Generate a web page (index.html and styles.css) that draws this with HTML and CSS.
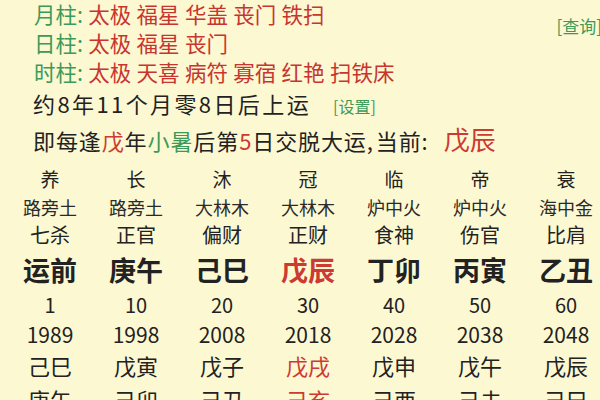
FILE: index.html
```html
<!DOCTYPE html>
<html lang="zh-CN">
<head>
    <meta charset="UTF-8">
    <meta name="viewport" content="width=device-width, initial-scale=1.0">
    <title>大运</title>
    <link rel="stylesheet" href="styles.css">
</head>
<body>

<div class="page">
    <div class="shensha">
        <div class="pillars">
            <div class="pillar"><span class="label">月柱:</span> 太极 福星 华盖 丧门 铁扫</div>
            <div class="pillar"><span class="label">日柱:</span> 太极 福星 丧门</div>
            <div class="pillar"><span class="label">时柱:</span> 太极 天喜 病符 寡宿 红艳 扫铁床</div>
        </div>
        <span class="link query">[查询]</span>
    </div>

    <div class="info qiyun">约8年11个月零8日后上运<span class="link setting">[设置]</span></div>
    <div class="info">即每逢<span class="red">戊</span>年<span class="green">小暑</span>后第<span class="red">5</span>日交脱大运,<span class="now">当前:</span><span class="current">戊辰</span></div>

    <div class="dayun">
        <div class="row stage">
            <div>养</div><div>长</div><div>沐</div><div>冠</div><div>临</div><div>帝</div><div>衰</div>
        </div>
        <div class="row nayin">
            <div>路旁土</div><div>路旁土</div><div>大林木</div><div>大林木</div><div>炉中火</div><div>炉中火</div><div>海中金</div>
        </div>
        <div class="row shishen">
            <div>七杀</div><div>正官</div><div>偏财</div><div>正财</div><div>食神</div><div>伤官</div><div>比肩</div>
        </div>
        <div class="row ganzhi">
            <div>运前</div><div>庚午</div><div>己巳</div><div class="red">戊辰</div><div>丁卯</div><div>丙寅</div><div>乙丑</div>
        </div>
        <div class="row age">
            <div>1</div><div>10</div><div>20</div><div>30</div><div>40</div><div>50</div><div>60</div>
        </div>
        <div class="row year">
            <div>1989</div><div>1998</div><div>2008</div><div>2018</div><div>2028</div><div>2038</div><div>2048</div>
        </div>
        <div class="row liunian">
            <div>己巳</div><div>戊寅</div><div>戊子</div><div class="red">戊戌</div><div>戊申</div><div>戊午</div><div>戊辰</div>
        </div>
        <div class="row liunian last">
            <div>庚午</div><div>己卯</div><div>己丑</div><div class="red">己亥</div><div>己酉</div><div>己未</div><div>己巳</div>
        </div>
    </div>
</div>

</body>
</html>
```

FILE: styles.css
```css
html, body {
    margin: 0;
    padding: 0;
    overflow: hidden;
}
body {
    font-family: "Noto Sans CJK SC", "Noto Sans", sans-serif;
    background-color: #fcf8d2;
    color: #222;
    width: 600px;
    height: 400px;
}
.page {
    margin-top: -1px;
}
.red {
    color: #cc3a32;
}
.green {
    color: #3b9a5a;
}
.link {
    color: #3b9a5a;
    font-size: 17px;
}

/* shensha lines */
.shensha {
    display: flex;
    justify-content: space-between;
    padding-left: 34px;
}
.pillar {
    font-size: 21.5px;
    line-height: 29px;
    word-spacing: 0.5px;
    color: #c8352f;
    white-space: nowrap;
}
.pillar .label {
    color: #3b9a5a;
}
.query {
    padding-top: 15px;
    margin-right: -2px;
    line-height: 24px;
}

/* qiyun info */
.info {
    padding-left: 33px;
    font-size: 22px;
    line-height: 34px;
    letter-spacing: 0.9px;
    white-space: nowrap;
}
.info.qiyun {
    letter-spacing: 2.4px;
}
.setting {
    font-size: 16px;
    margin-left: 22px;
    letter-spacing: 0;
}
.now {
    margin-left: 2px;
}
.current {
    color: #cc3a32;
    font-size: 26px;
    line-height: 20px;
    margin-left: 15px;
    letter-spacing: 0;
}

/* dayun table */
.dayun {
    margin-left: 7px;
    margin-top: 8px;
}
.row {
    display: grid;
    grid-template-columns: repeat(7, 86px);
    text-align: center;
    white-space: nowrap;
}
.stage {
    font-size: 19px;
    line-height: 28px;
}
.nayin {
    font-size: 18px;
    line-height: 28px;
    color: #2a2a2a;
}
.shishen {
    font-size: 20px;
    line-height: 28px;
}
.ganzhi {
    font-size: 27px;
    font-weight: bold;
    line-height: 42px;
}
.age {
    font-size: 20px;
    line-height: 28px;
}
.year {
    font-size: 21px;
    line-height: 30px;
}
.liunian {
    font-size: 22px;
    line-height: 32px;
}
.liunian.last {
    line-height: 36px;
}
```
